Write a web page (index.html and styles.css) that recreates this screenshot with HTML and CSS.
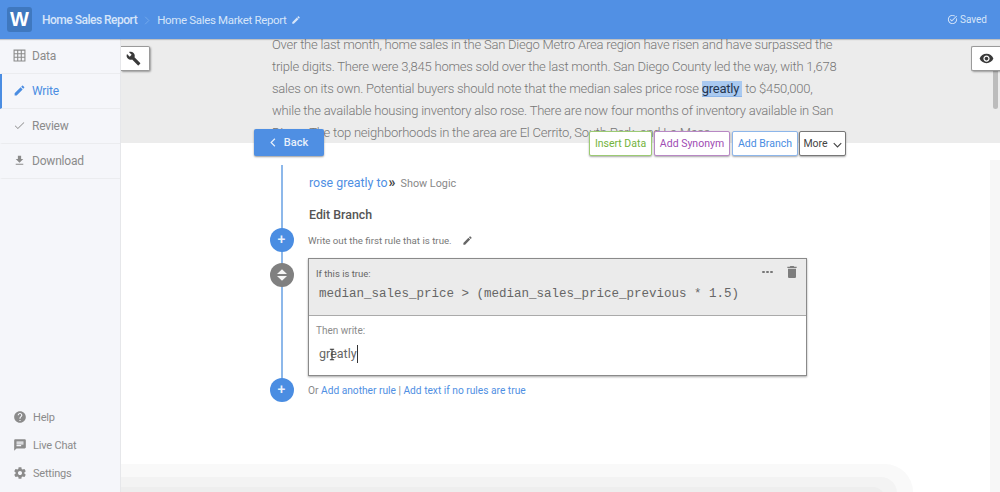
FILE: index.html
```html
<!DOCTYPE html>
<html lang="en">
<head>
<meta charset="utf-8">
<title>Home Sales Market Report</title>
<link rel="stylesheet" href="styles.css">
</head>
<body>
<svg class="sprite" width="0" height="0" aria-hidden="true">
  <symbol id="i-pencil" viewBox="0 0 24 24"><path d="M3 17.25V21h3.75L17.81 9.94l-3.75-3.75L3 17.25zM20.71 7.04c.39-.39.39-1.02 0-1.41l-2.34-2.34c-.39-.39-1.02-.39-1.41 0l-1.83 1.83 3.75 3.75 1.83-1.83z"/></symbol>
</svg>
<header class="topbar">
  <div class="logo">W</div>
  <span class="crumb crumb-strong">Home Sales Report</span>
  <svg class="crumb-sep" viewBox="0 0 8 12"><path d="M1.5 1l5 5-5 5" fill="none" stroke="currentColor" stroke-width="1"/></svg>
  <span class="crumb">Home Sales Market Report</span>
  <svg class="crumb-edit"><use href="#i-pencil"/></svg>
  <div class="saved">
    <svg class="saved-icon" viewBox="0 0 24 24"><path d="M22 5.18L10.59 16.6l-4.24-4.24 1.41-1.41 2.83 2.83 10-10L22 5.18zm-2.21 5.04c.13.57.21 1.17.21 1.78 0 4.42-3.58 8-8 8s-8-3.58-8-8 3.58-8 8-8c1.58 0 3.04.46 4.28 1.25l1.44-1.44C16.1 2.67 14.13 2 12 2 6.48 2 2 6.48 2 12s4.48 10 10 10 10-4.48 10-10c0-1.19-.22-2.33-.6-3.39l-1.61 1.61z"/></svg>
    <span>Saved</span>
  </div>
</header>
<div class="shell">
  <nav class="sidebar">
    <ul class="nav-main">
      <li class="nav-item">
        <svg class="nav-icon" viewBox="0 0 24 24"><path d="M2 2h20v20H2z M2 8.7h20 M2 15.3h20 M8.7 2v20 M15.3 2v20" fill="none" stroke="currentColor" stroke-width="2"/></svg>
        <span>Data</span>
      </li>
      <li class="nav-item nav-active">
        <svg class="nav-icon"><use href="#i-pencil"/></svg>
        <span>Write</span>
      </li>
      <li class="nav-item">
        <svg class="nav-icon" viewBox="0 0 24 24"><path d="M9 16.6L4.4 12l-1 1L9 18.6 20.8 6.8l-1-1z"/></svg>
        <span>Review</span>
      </li>
      <li class="nav-item">
        <svg class="nav-icon" viewBox="0 0 24 24"><path d="M19 9h-4V3H9v6H5l7 7 7-7zM5 18v2h14v-2H5z"/></svg>
        <span>Download</span>
      </li>
    </ul>
    <ul class="nav-foot">
      <li class="foot-item">
        <svg class="nav-icon" viewBox="0 0 24 24"><path d="M12 2C6.48 2 2 6.48 2 12s4.48 10 10 10 10-4.48 10-10S17.52 2 12 2zm1 17h-2v-2h2v2zm2.07-7.75l-.9.92C13.45 12.9 13 13.5 13 15h-2v-.5c0-1.1.45-2.1 1.17-2.83l1.24-1.26c.37-.36.59-.86.59-1.41 0-1.1-.9-2-2-2s-2 .9-2 2H8c0-2.21 1.79-4 4-4s4 1.79 4 4c0 .88-.36 1.68-.93 2.25z"/></svg>
        <span>Help</span>
      </li>
      <li class="foot-item">
        <svg class="nav-icon" viewBox="0 0 24 24"><path d="M20 2H4c-1.1 0-1.99.9-1.99 2L2 22l4-4h14c1.1 0 2-.9 2-2V4c0-1.1-.9-2-2-2zM6 9h12v2H6V9zm8 5H6v-2h8v2zm4-6H6V6h12v2z"/></svg>
        <span>Live Chat</span>
      </li>
      <li class="foot-item">
        <svg class="nav-icon" viewBox="0 0 24 24"><path d="M19.43 12.98c.04-.32.07-.64.07-.98s-.03-.66-.07-.98l2.11-1.65c.19-.15.24-.42.12-.64l-2-3.46c-.12-.22-.39-.3-.61-.22l-2.49 1c-.52-.4-1.08-.73-1.69-.98l-.38-2.65C14.46 2.18 14.25 2 14 2h-4c-.25 0-.46.18-.49.42l-.38 2.65c-.61.25-1.17.59-1.69.98l-2.49-1c-.23-.09-.49 0-.61.22l-2 3.46c-.13.22-.07.49.12.64l2.11 1.65c-.04.32-.07.65-.07.98s.03.66.07.98l-2.11 1.65c-.19.15-.24.42-.12.64l2 3.46c.12.22.39.3.61.22l2.49-1c.52.4 1.08.73 1.69.98l.38 2.65c.03.24.24.42.49.42h4c.25 0 .46-.18.49-.42l.38-2.65c.61-.25 1.17-.59 1.69-.98l2.49 1c.23.09.49 0 .61-.22l2-3.46c.12-.22.07-.49-.12-.64l-2.11-1.65zM12 15.5c-1.93 0-3.5-1.57-3.5-3.5s1.57-3.5 3.5-3.5 3.5 1.57 3.5 3.5-1.57 3.5-3.5 3.5z"/></svg>
        <span>Settings</span>
      </li>
    </ul>
  </nav>
  <main class="main">
    <section class="doc">
      <p class="doc-text">Over the last month, home sales in the San Diego Metro Area region have risen and have surpassed the<br>triple digits. There were 3,845 homes sold over the last month. San Diego County led the way, with 1,678<br>sales on its own. Potential buyers should note that the median sales price rose <mark class="doc-mark">greatly&nbsp;</mark> to $450,000,<br>while the available housing inventory also rose. There are now four months of inventory available in San<br>Diego. The top neighborhoods in the area are El Cerrito, South Park, and La Mesa.</p>
      <div class="scroll-thumb"></div>
    </section>

    <button class="tab tab-left" type="button" aria-label="Tools">
      <svg viewBox="0 0 24 24"><path d="M22.7 19l-9.1-9.1c.9-2.3.4-5-1.5-6.9-2-2-5-2.4-7.4-1.3L9 6 6 9 1.6 4.7C.4 7.1.9 10.1 2.9 12.1c1.9 1.9 4.6 2.4 6.9 1.5l9.1 9.1c.4.4 1 .4 1.4 0l2.3-2.3c.5-.4.5-1.1.1-1.4z"/></svg>
    </button>
    <button class="tab tab-right" type="button" aria-label="Preview">
      <svg viewBox="0 0 24 24"><path d="M12 4.5C7 4.5 2.73 7.61 1 12c1.73 4.39 6 7.5 11 7.5s9.27-3.11 11-7.5c-1.73-4.39-6-7.5-11-7.5zM12 17c-2.76 0-5-2.24-5-5s2.24-5 5-5 5 2.24 5 5-2.24 5-5 5zm0-8c-1.66 0-3 1.34-3 3s1.34 3 3 3 3-1.34 3-3-1.34-3-3-3z"/></svg>
    </button>

    <div class="toolbar">
      <button class="back" type="button">
        <svg viewBox="0 0 8 12"><path d="M6.5 1L1.5 6l5 5" fill="none" stroke="currentColor" stroke-width="1.6"/></svg>
        <span>Back</span>
      </button>
      <div class="actions">
        <button class="act act-green" type="button">Insert Data</button>
        <button class="act act-purple" type="button">Add Synonym</button>
        <button class="act act-blue" type="button">Add Branch</button>
        <button class="act act-dark" type="button">More
          <svg viewBox="0 0 12 8"><path d="M1 1.5l5 5 5-5" fill="none" stroke="currentColor" stroke-width="1.5"/></svg>
        </button>
      </div>
    </div>

    <section class="editor">
      <div class="rail-line"></div>
      <div class="row row-logic">
        <div class="rail"></div>
        <div class="logic"><span class="logic-link">rose greatly to</span><span class="logic-arrows">»</span><span class="logic-show">Show Logic</span></div>
      </div>
      <div class="row row-title">
        <div class="rail"></div>
        <h2 class="title">Edit Branch</h2>
      </div>
      <div class="row row-hint">
        <div class="rail"><span class="dot">+</span></div>
        <div class="hint"><span>Write out the first rule that is true.</span><svg class="hint-edit"><use href="#i-pencil"/></svg></div>
      </div>
      <div class="row row-card">
        <div class="rail"><span class="dot dot-sort">
          <svg viewBox="0 0 24 24"><path d="M12 3.5l7.5 7h-15zM12 20.5l7.5-7h-15z"/></svg>
        </span></div>
        <div class="card">
          <div class="card-top">
            <div class="card-tools">
              <span class="dots"><i></i><i></i><i></i></span>
              <svg class="trash" viewBox="0 0 24 24"><path d="M6 19c0 1.1.9 2 2 2h8c1.1 0 2-.9 2-2V7H6v12zM19 4h-3.5l-1-1h-5l-1 1H5v2h14V4z"/></svg>
            </div>
            <div class="card-label">If this is true:</div>
            <code class="card-code">median_sales_price &gt; (median_sales_price_previous * 1.5)</code>
          </div>
          <div class="card-bottom">
            <div class="card-label card-label-soft">Then write:</div>
            <div class="card-input"><span class="typed">greatly</span><svg class="ibeam" viewBox="0 0 7 14"><path d="M1 1h5M3.5 1v12M1 13h5" fill="none" stroke="#333" stroke-width="1.2"/></svg></div>
          </div>
        </div>
      </div>
      <div class="row row-or">
        <div class="rail"><span class="dot">+</span></div>
        <div class="or">Or <a class="link">Add another rule</a> | <a class="link">Add text if no rules are true</a></div>
      </div>
    </section>

    <div class="ghost"><div class="ghost-2"><div class="ghost-3"></div></div></div>
    <div class="side-strip"></div>
  </main>
</div>
</body>
</html>
```

FILE: styles.css
```css
* { box-sizing: border-box; }
html, body { height: 100%; }
body {
  margin: 0;
  height: 492px;
  overflow: hidden;
  background: #fff;
  color: #555;
  font-family: Roboto, "Liberation Sans", sans-serif;
  display: flex;
  flex-direction: column;
}
button { font-family: inherit; cursor: pointer; }
ul { list-style: none; margin: 0; padding: 0; }
svg { fill: currentColor; display: block; }
.sprite { position: absolute; }

.topbar {
  height: 39px;
  flex: none;
  background: #5190e4;
  box-shadow: 0 1px 1px rgba(0,0,0,.18);
  display: flex;
  align-items: center;
  padding: 0 13px 0 7px;
  color: #d6e5f9;
  position: relative;
  z-index: 5;
}
.logo {
  width: 25px;
  height: 25px;
  border-radius: 3px;
  background: #3f78bf;
  color: #fff;
  font: 700 20px/25px "Liberation Sans", sans-serif;
  text-align: center;
  margin-right: 10px;
}
.crumb { font-size: 11.5px; letter-spacing: -.33px; }
.crumb-strong { font-size: 12px; font-weight: 500; letter-spacing: -.5px; }
.crumb-sep { width: 6px; height: 9px; margin: 1px 7px 0 7px; color: #7fb0ee; }
.crumb-edit { width: 10px; height: 10px; margin-left: 4px; }
.saved { margin-left: auto; display: flex; align-items: center; font-size: 10px; gap: 2px; }
.saved-icon { width: 11px; height: 11px; }

.shell { flex: 1; display: flex; min-height: 0; }

.sidebar {
  width: 121px;
  flex: none;
  background: #f5f6fa;
  border-right: 1px solid #e6e7ea;
  display: flex;
  flex-direction: column;
  justify-content: space-between;
  color: #8b8b8b;
  font-size: 12px;
  letter-spacing: -.2px;
}
.nav-item {
  height: 34.9px;
  display: flex;
  align-items: center;
  gap: 6px;
  border-bottom: 1px solid #ebecef;
  border-left: 2px solid transparent;
  padding-left: 11px;
}
.nav-active { color: #4a8de2; border-left-color: #4a8de2; }
.nav-icon { width: 13px; height: 13px; flex: none; }
.nav-foot { padding-bottom: 5px; }
.foot-item {
  height: 28px;
  display: flex;
  align-items: center;
  gap: 7px;
  padding-left: 13px;
  font-size: 11px;
}
.foot-item .nav-icon { width: 14px; height: 14px; margin-right: -1px; }

.main { flex: 1; position: relative; overflow: hidden; min-width: 0; }

.doc {
  height: 104px;
  background: #ececec;
  padding-left: 151px;
  overflow: hidden;
  position: relative;
}
.doc-text {
  margin: -5px 0 0;
  font-size: 13px;
  font-weight: 300;
  letter-spacing: -.22px;
  line-height: 22px;
  color: #777;
  white-space: nowrap;
}
.doc-mark {
  background: #a9c9f0;
  color: #25364f;
  font-weight: 400;
  border-bottom: 1px solid #8db6ea;
}
.scroll-thumb {
  position: absolute;
  right: 2px;
  top: 30px;
  width: 5px;
  height: 40px;
  border-radius: 3px;
  background: #bcbcbc;
}

.tab {
  position: absolute;
  top: 7px;
  width: 29px;
  height: 25px;
  padding: 0;
  background: #fff;
  color: #3a3a3a;
  border: 1px solid #9a9a9a;
  box-shadow: 1px 1px 2px rgba(0,0,0,.35);
  display: flex;
  align-items: center;
  justify-content: center;
}
.tab svg { width: 15px; height: 15px; }
.tab-left { left: 0; border-left: 0; border-radius: 0 2px 2px 0; padding-right: 4px; }
.tab-right { right: 0; border-right: 0; border-radius: 2px 0 0 2px; }

.toolbar {
  position: absolute;
  left: 133px;
  top: 90px;
  width: 592px;
  display: flex;
  justify-content: space-between;
  z-index: 3;
}
.back {
  width: 70px;
  height: 27px;
  border: 0;
  border-radius: 2px;
  background: #4f8fe3;
  color: #e8f0fb;
  font-size: 11px;
  font-weight: 500;
  display: flex;
  align-items: center;
  justify-content: center;
  gap: 8px;
  padding: 0;
  box-shadow: 0 1px 2px rgba(0,0,0,.4);
}
.back svg { width: 6px; height: 9px; }
.actions { display: flex; gap: 2px; margin-top: 2px; }
.act {
  height: 25px;
  background: #fff;
  border: 1px solid;
  border-radius: 2px;
  font-size: 10.5px;
  padding: 0;
  box-shadow: 0 1px 2px rgba(0,0,0,.35);
  display: flex;
  align-items: center;
  justify-content: center;
  gap: 5px;
}
.act-green { width: 63px; color: #73b33d; border-color: #9ccb73; }
.act-purple { width: 76px; color: #a04cb3; border-color: #b888c4; }
.act-blue { width: 66px; color: #4a8de2; border-color: #8db6ea; }
.act-dark { width: 47px; color: #444; border-color: #777; margin-left: -1px; }
.act-dark svg { width: 9px; height: 6px; margin-top: 2px; }

.editor {
  position: relative;
  padding-top: 24px;
  margin-left: 133px;
  width: 553px;
}
.rail-line {
  position: absolute;
  left: 27px;
  top: 22px;
  height: 215px;
  width: 2px;
  background: #8db8ea;
}
.row {
  display: grid;
  grid-template-columns: 55px 1fr;
  position: relative;
}
.rail { display: flex; justify-content: center; }
.dot {
  width: 24px;
  height: 24px;
  border-radius: 50%;
  background: #4a8de2;
  color: #e8f0fb;
  font-size: 14px;
  font-weight: 500;
  line-height: 23px;
  text-align: center;
}
.dot-sort {
  background: #808080;
  color: #f4f4f4;
  display: flex;
  align-items: center;
  justify-content: center;
}
.dot-sort svg { width: 16px; height: 16px; }
.row-logic { height: 31px; align-items: center; }
.row-logic .rail { height: 24px; }
.logic { display: flex; align-items: baseline; }
.logic-link { font-size: 12.4px; color: #4f8fe3; }
.logic-arrows { font-size: 14px; font-weight: 700; color: #444; margin: 0 3px 0 1px; line-height: 1; }
.logic-show { font-size: 10.8px; color: #888; margin-left: 2px; }
.row-title { height: 31px; padding-top: 2px; align-items: center; }
.title { margin: 0; font-size: 12.4px; font-weight: 500; color: #555; }
.row-hint { height: 22px; align-items: center; }
.row-hint .rail { margin-top: -1px; }
.hint { display: flex; align-items: center; font-size: 9.7px; color: #777; gap: 10px; margin-left: -1px; }
.hint-edit { width: 11px; height: 11px; color: #666; }

.row-card { margin-top: 7px; }
.row-card .rail { padding-top: 5px; }
.card {
  width: 499px;
  height: 118px;
  margin-left: -1px;
  border: 1px solid #8a8a8a;
  box-shadow: 0 1px 2px rgba(0,0,0,.35);
  background: #fff;
}
.card-top {
  height: 57px;
  background: #ebebeb;
  border-bottom: 1px solid #aaa;
  padding: 8px 7px 0;
  position: relative;
}
.card-tools {
  position: absolute;
  right: 6px;
  top: 5px;
  display: flex;
  align-items: center;
  gap: 11.5px;
  color: #7d7d7d;
}
.dots { display: flex; gap: 1.5px; }
.dots i { width: 2.5px; height: 2.5px; border-radius: 50%; background: #777; }
.trash { width: 16px; height: 16px; }
.card-label { font-size: 9.5px; color: #666; line-height: 14px; }
.card-label-soft { color: #8b8b8b; font-size: 10px; }
.card-code {
  display: block;
  margin: 5px 0 0 3px;
  font: 12.5px/16px "Liberation Mono", monospace;
  color: #666;
  white-space: nowrap;
}
.card-bottom { padding: 8px 7px 0; }
.card-input { position: relative; margin: 7px 0 0 3px; font-size: 12.5px; color: #666; line-height: 18px; }
.typed { border-right: 1px solid #333; display: inline-block; }
.ibeam { position: absolute; left: 10px; top: 3px; width: 6px; height: 13px; }

.row-or { margin-top: 2px; height: 24px; align-items: center; }
.or { font-size: 10.2px; color: #888; margin-left: -1px; }
.link { color: #4f8fe3; }

.ghost {
  position: absolute;
  left: 0;
  top: 425px;
  width: 792px;
  height: 60px;
  background: #f9f9f9;
  border-radius: 0 28px 0 0;
  padding-top: 13px;
}
.ghost-2 {
  width: 776px;
  height: 47px;
  background: #f3f3f3;
  border-radius: 0 16px 0 0;
  padding-top: 10px;
}
.ghost-3 {
  width: 764px;
  height: 37px;
  background: #eeeeee;
  border-radius: 0 12px 0 0;
}
.side-strip {
  position: absolute;
  right: 0;
  top: 121px;
  bottom: 0;
  width: 10px;
  background: #f7f7f7;
}
```
